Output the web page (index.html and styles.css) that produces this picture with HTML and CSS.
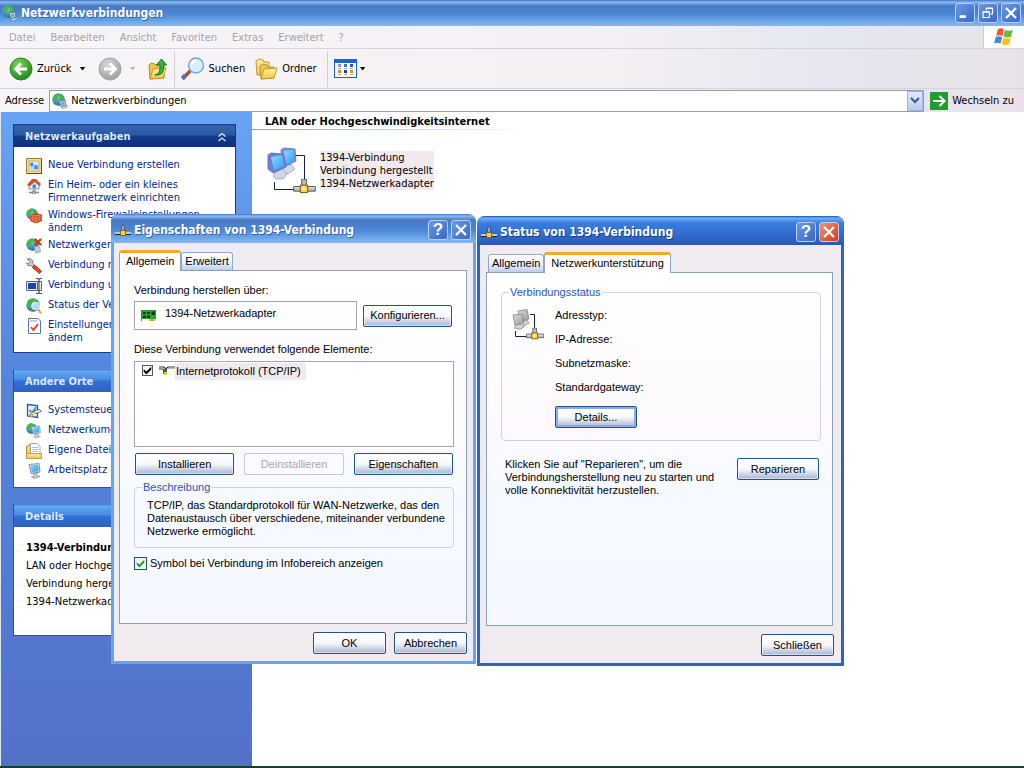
FILE: index.html
```html
<!DOCTYPE html>
<html lang="de">
  <head>
    <meta charset="UTF-8" />
    <meta name="viewport" content="width=device-width, initial-scale=1.0" />
    <title>Netzwerkverbindungen</title>
    <link rel="stylesheet" href="styles.css">
  </head>
  <body>
    <svg class="sprites" width="0" height="0" aria-hidden="true">
      <defs>
        <linearGradient id="g-screen" x1="0" y1="0" x2="1" y2="1">
          <stop offset="0" stop-color="#8fdcff" /><stop offset="1" stop-color="#2a9cf0" />
        </linearGradient>
        <linearGradient id="g-grey" x1="0" y1="0" x2="1" y2="1">
          <stop offset="0" stop-color="#dcdcdc" /><stop offset="1" stop-color="#9a9a9a" />
        </linearGradient>
        <radialGradient id="g-green" cx="0.4" cy="0.3" r="0.7">
          <stop offset="0" stop-color="#7fd65c" /><stop offset="1" stop-color="#1f8a1c" />
        </radialGradient>
        <radialGradient id="g-disabled" cx="0.4" cy="0.3" r="0.7">
          <stop offset="0" stop-color="#d8d8d8" /><stop offset="1" stop-color="#a2a2a4" />
        </radialGradient>
        <radialGradient id="g-globe" cx="0.35" cy="0.3" r="0.8">
          <stop offset="0" stop-color="#8fd0ff" /><stop offset="1" stop-color="#0d4fb4" />
        </radialGradient>
        <linearGradient id="g-folder" x1="0" y1="0" x2="0" y2="1">
          <stop offset="0" stop-color="#fff3a8" /><stop offset="1" stop-color="#f0c544" />
        </linearGradient>
      </defs>

      <symbol id="globe" viewBox="0 0 16 16">
        <circle cx="8" cy="8" r="7.700" fill="url(#g-globe)" />
        <path d="M2 4Q4 0.500 8 0.500L10 3L7 5L7 9L5 11L1 8ZM10 1L14 4L15 8L12 10L9.500 6Z" fill="#45b83a" />
        <path d="M6 12L9 15L4 14Z" fill="#35a82e" />
      </symbol>
      <symbol id="net" viewBox="0 0 16 16">
        <use href="#globe" width="13" height="13" />
        <path d="M7 8L13 7L14 12L9 13.500Z" fill="#dfe8f4" stroke="#5b6d8c" stroke-width="0.800" />
        <path d="M8.300 9L12.200 8.200L12.900 11.200L9.600 12.300Z" fill="#55aef0" />
        <path d="M9 14L15 12.500L15.500 14L10.500 15.800Z" fill="#e8e8e8" stroke="#6a6a6a" stroke-width="0.600" />
      </symbol>
      <symbol id="lan" viewBox="0 0 16 16">
        <path d="M7 3H9V9H7Z" fill="#d8d8d8" stroke="#222" stroke-width="0.600" />
        <path d="M0 10H16V12H0Z" fill="#c8c8c8" /><path d="M0 12H16V13H0Z" fill="#222" />
        <path d="M5.500 8.500H10.500V13.500H5.500Z" fill="#ffcf3a" stroke="#6a4a00" stroke-width="0.700" />
      </symbol>
      <symbol id="wizard" viewBox="0 0 16 16">
        <path d="M0.500 0.500H15.500V15.500H0.500Z" fill="#f4dc94" stroke="#a47c24" />
        <path d="M15.500 1V15.500H1" fill="none" stroke="#5c4a20" />
        <path d="M3 3H13V13H3Z" fill="#d8eafc" stroke="#c08c20" stroke-width="0.600" />
        <path d="M4 5L7 4.500L7.500 8L4.500 8.500ZM8 7.500L11.500 7L12 11L8.500 11.500Z" fill="#3a8be0" />
        <path d="M5 10H7.500" stroke="#8a98b0" />
      </symbol>
      <symbol id="home" viewBox="0 0 16 16">
        <path d="M3 6L8 2L13 6V11H3Z" fill="#e6eefa" stroke="#6077a0" stroke-width="0.800" />
        <path d="M1 7L6 1L10 1L15 6L13.500 8L8.500 4L3.500 8.500Z" fill="#d94f25" />
        <path d="M6.500 6.500H10V10H6.500Z" fill="#3e92dc" />
        <path d="M8 11V14M3 14.500H13" stroke="#888" stroke-width="1.500" /><path d="M6.500 13H9.500V16H6.500Z" fill="#bbb" stroke="#666" stroke-width="0.500" />
      </symbol>
      <symbol id="firewall" viewBox="0 0 16 16">
        <use href="#globe" width="12" height="12" />
        <path d="M4 7L10 5L16 6.500V13L10 15.500L4 13Z" fill="#c8441c" />
        <path d="M4 9.500L10 10.500L16 8.800M4 11.500L10 13L16 11M10 7V15M7 7.500V10M13 7V9.500M7 10V12M13 10V12M4 7L10 8L16 6.500" fill="none" stroke="#f0b080" stroke-width="0.600" />
      </symbol>
      <symbol id="disable" viewBox="0 0 16 16">
        <use href="#globe" width="13" height="13" />
        <path d="M8 9L13 8L14.500 12.500L9.500 14Z" fill="#b8d4f4" stroke="#8f9fbc" stroke-width="0.700" />
        <path d="M9 15L15 13.500" stroke="#bbb" stroke-width="1.500" />
        <path d="M9 1L15 7M15 1L9 7" stroke="#e02a10" stroke-width="2.200" />
      </symbol>
      <symbol id="wrench" viewBox="0 0 16 16">
        <path d="M1 1L4 0.500L7 3L7 6L9 8L7 9.500L5 7.500L2 7.500L0.500 5L3 5.500L4.500 4Z" fill="#c8ccd4" stroke="#565b66" stroke-width="0.700" />
        <path d="M8.500 7L15.500 13L13.500 15.500L6.500 9.500Z" fill="#e8452e" stroke="#8e1a0c" stroke-width="0.800" />
      </symbol>
      <symbol id="rename" viewBox="0 0 16 16">
        <path d="M0.500 3.500H11.500V12.500H0.500Z" fill="#e6e8ec" stroke="#5a6474" /><path d="M2 5H10V11H2Z" fill="#1546b8" />
        <path d="M11.500 3.500H15.500V12.500H11.500Z" fill="#eee" stroke="#5a6474" />
        <path d="M10 0.500H12L13 1.500L14 0.500H16M13 1V14.500M10 15.500H12L13 14.500L14 15.500H16" fill="none" stroke="#4a4f5a" stroke-width="1.200" />
      </symbol>
      <symbol id="status" viewBox="0 0 16 16">
        <use href="#globe" width="14" height="14" />
        <circle cx="9.500" cy="8" r="3.800" fill="#d0ecff" fill-opacity="0.800" stroke="#e8f4ff" />
        <path d="M12 11L15 15.500" stroke="#d0a030" stroke-width="1.800" />
      </symbol>
      <symbol id="settings" viewBox="0 0 16 16">
        <path d="M2.500 0.500H12L14.500 3V15.500H2.500Z" fill="#fff" stroke="#5878ac" /><path d="M4 2H11V4H4Z" fill="#b8cdf0" />
        <path d="M5 9L7.500 12L12 6" fill="none" stroke="#e04020" stroke-width="1.800" />
      </symbol>
      <symbol id="control" viewBox="0 0 16 16">
        <path d="M1.500 1.500L11.500 2.500V14.500L1.500 13Z" fill="#e4efff" stroke="#2a5ba8" stroke-width="1.300" />
        <path d="M3.500 7L6 10L10 4" fill="none" stroke="#3f88e0" stroke-width="1.800" />
        <path d="M8 8L14 6.500L15.500 8.500L9.500 10.500Z" fill="#fff" stroke="#333" stroke-width="0.700" /><path d="M3 11L6 9L8 12L5 15Z" fill="#e8b030" />
      </symbol>
      <symbol id="computer" viewBox="0 0 16 16">
        <path d="M3 1.500L13 0.500L14 9L5 10.500Z" fill="#dfe6f2" stroke="#6a7a9a" stroke-width="0.800" />
        <path d="M4.200 2.500L12 1.700L12.800 8.200L5.800 9.300Z" fill="url(#g-screen)" />
        <path d="M7 10.500L11 10V12.500L14 13.500L9 15.500L5.500 14L8 12.500Z" fill="#c8cad2" stroke="#7a7e8a" stroke-width="0.600" />
      </symbol>
      <symbol id="places" viewBox="0 0 16 16">
        <use href="#globe" width="11" height="11" /><use href="#computer" x="3" y="2" width="13" height="14" />
      </symbol>
      <symbol id="files" viewBox="0 0 16 16">
        <path d="M0.500 3.500L2 2H5L6.500 3.500V14.500H0.500Z" fill="#f4d468" stroke="#a57f18" stroke-width="0.800" />
        <path d="M4.500 0.500H11L14 3.500V12H4.500Z" fill="#fff" stroke="#7c92b8" stroke-width="0.800" />
        <path d="M6 4.500H12M6 6.500H12M6 8.500H12" stroke="#9ab0d4" stroke-width="0.800" />
        <path d="M0.500 10.500H15.500V15.500H0.500Z" fill="url(#g-folder)" stroke="#b08a20" stroke-width="0.800" />
      </symbol>
      <symbol id="card" viewBox="0 0 16 16">
        <path d="M0 3H15V12H0Z" fill="#2f9e34" /><path d="M0 3H1V14H0Z" fill="#666" />
        <path d="M2 5H5V7H2ZM6 5H9V7H6ZM2 8.500H5V11H2ZM6 8.500H9V11H6ZM10.500 4.500H14V8H10.500Z" fill="#123c16" />
        <path d="M8 12H14V14H8Z" fill="#d6b42c" />
      </symbol>
      <symbol id="protocol" viewBox="0 0 16 16">
        <path d="M0 4H5L7 6L9 4H16M0 6H4L7 10" fill="none" stroke="#333" stroke-width="1.200" />
        <path d="M9 5.200H16" stroke="#999" /><path d="M4 6H8V11H4Z" fill="#555" /><path d="M5 9H8V12H5Z" fill="#e0d020" />
      </symbol>
      <symbol id="logo" viewBox="0 0 20 18">
        <path d="M4 1Q7 -0.500 10 1.500L8.500 8Q5.500 6.500 2 8Z" fill="#f0592a" />
        <path d="M11 2Q14.500 3.500 19 2L17 9Q13 10 9.500 8.500Z" fill="#6cba3c" />
        <path d="M1.800 9Q5 7.500 8.200 9L6.500 15.500Q3.500 14 0 15.500Z" fill="#3f86e0" />
        <path d="M9.200 9.500Q13 11 16.800 10L15 16.500Q11 18 7.500 16Z" fill="#fcc320" />
      </symbol>
      <symbol id="connection" viewBox="0 0 50 48">
        <path d="M28 8.500H37.500V33M7.500 35V42.500H27" fill="none" stroke="#151c60" />
        <path d="M17 18L24 17L28 22L21 27L15 24Z" fill="#d2d6e8" stroke="#8f95b4" stroke-width="0.700" />
        <path d="M14 3L17 1L28 2L29 14L19 19L15 17Z" fill="#7f90dc" stroke="#5a69ba" stroke-width="0.800" />
        <path d="M17 4L26.500 3L27.500 13.500L19 17Z" fill="url(#g-screen)" />
        <path d="M8 25L15 22L20 27L16 32L9 32L6 29Z" fill="#d2d6e8" stroke="#8f95b4" stroke-width="0.700" />
        <path d="M1 8L4 6L16 7L19 20L6 26L1 22Z" fill="#6f80d4" stroke="#5a69ba" stroke-width="0.800" />
        <path d="M4 10L15 8L17.500 19L7 23Z" fill="url(#g-screen)" />
      </symbol>
      <symbol id="plug" viewBox="0 0 24 16">
        <path d="M9 0H14V8H9Z" fill="#b8bcc0" stroke="#333" stroke-width="0.800" />
        <path d="M0.500 8H23.500V13H0.500Z" fill="#b8bcc0" stroke="#333" stroke-width="0.800" /><path d="M1 9.500H23" stroke="#eee" />
        <path d="M7.500 6.500H15.500V14.500H7.500Z" fill="#ffd04a" stroke="#704c00" /><path d="M9.500 8.500H13V12H9.500Z" fill="#fff0a0" />
      </symbol>
      <symbol id="connection-off" viewBox="0 0 32 32">
        <path d="M18 5.500H22.500V20M3.500 22V27.500H16" fill="none" stroke="#151c60" />
        <path d="M10 12L15 11L17 14L12 17Z" fill="#d2d2d2" stroke="#909090" stroke-width="0.800" />
        <path d="M6 2L15 0.500L17 10L9 12Z" fill="url(#g-grey)" stroke="#888" stroke-width="0.800" />
        <path d="M4 16L9 15L12 18L8 20.500L2 19Z" fill="#d2d2d2" stroke="#909090" stroke-width="0.800" />
        <path d="M1 6L10 5L12 13.500L3 16.500Z" fill="url(#g-grey)" stroke="#888" stroke-width="0.800" />
        <use href="#plug" x="14" y="19" width="18" height="12" />
      </symbol>
    </svg>

    <header class="titlebar main-title">
      <svg class="icon"><use href="#net" /></svg>
      <h1>Netzwerkverbindungen</h1>
      <button class="cap" aria-label="Minimieren"><svg viewBox="0 0 20 20"><path d="M4 14H11" stroke="#fff" stroke-width="3" /></svg></button>
      <button class="cap" aria-label="Wiederherstellen"><svg viewBox="0 0 20 20"><path d="M4.500 9H11.500V15H4.500ZM4.500 8.500H11.500M8 7V5H15V11H13M8 4.500H15" fill="none" stroke="#fff" stroke-width="1.300" /></svg></button>
      <button class="cap" aria-label="Schließen"><svg viewBox="0 0 20 20"><path d="M4.500 4.500L15.500 15.500M15.500 4.500L4.500 15.500" stroke="#fff" stroke-width="2.500" /></svg></button>
    </header>

    <nav class="menubar">
      <a href="#">Datei</a>
      <a href="#">Bearbeiten</a>
      <a href="#">Ansicht</a>
      <a href="#">Favoriten</a>
      <a href="#">Extras</a>
      <a href="#">Erweitert</a>
      <a href="#">?</a>
      <span class="logo"><svg width="20" height="18"><use href="#logo" /></svg></span>
    </nav>

    <div class="toolbar">
      <button class="tool">
        <svg width="24" height="24"><circle cx="12" cy="12" r="11" fill="url(#g-green)" stroke="#2d8a28" /><path d="M18 12H7M12 6.500L6.500 12L12 17.500" fill="none" stroke="#fff" stroke-width="2.800" /></svg>
        Zurück
      </button>
      <button class="arrow" aria-label="Zurück-Verlauf"></button>
      <button class="tool forward" aria-label="Vorwärts" disabled>
        <svg width="24" height="24"><circle cx="12" cy="12" r="11" fill="url(#g-disabled)" stroke="#a4a4a8" /><path d="M6 12H17M12 6.500L17.500 12L12 17.500" fill="none" stroke="#fff" stroke-width="2.800" /></svg>
      </button>
      <button class="arrow" aria-label="Vorwärts-Verlauf" disabled></button>
      <button class="tool up" aria-label="Aufwärts">
        <svg width="20" height="24"><path d="M1 8L3 6L7 7L9 9H16V21L2 22Z" fill="#edc34a" stroke="#b98d22" /><path d="M2 22L5 12L18 11L15 21Z" fill="url(#g-folder)" stroke="#c09a2a" /><path d="M7 18Q13 17 12 8H8.500L13.500 2L18.500 8H15.500Q17 19 7 18Z" fill="#3fb43a" stroke="#13741a" /></svg>
      </button>
      <span class="sep"></span>
      <button class="tool search">
        <svg width="24" height="24"><path d="M1.500 22L10 13" stroke="#a8532c" stroke-width="3.500" /><path d="M1.500 21L4 18.500" stroke="#5b69c0" stroke-width="4" /><circle cx="15" cy="8.500" r="7.500" fill="#d6efff" stroke="#7ea6dc" stroke-width="1.500" /><path d="M10.500 8Q11 4 15 3.500" fill="none" stroke="#fff" stroke-width="2" /></svg>
        Suchen
      </button>
      <button class="tool folders">
        <svg width="23" height="24"><path d="M1 4L4 2L8 3L9 5H14V17L2 18Z" fill="url(#g-folder)" stroke="#c29a30" /><path d="M5 9L8 7L12 8L13 10H19V21L6 22Z" fill="#f0c850" stroke="#b8902a" /><path d="M6 22L9 12L22 11L19 21Z" fill="url(#g-folder)" stroke="#c29a30" /></svg>
        Ordner
      </button>
      <span class="sep"></span>
      <button class="tool view" aria-label="Ansichten">
        <svg width="24" height="20"><rect x="0.500" y="0.500" width="22" height="18" fill="#fff" stroke="#1d5fc4" /><path d="M0 0H23V4H0Z" fill="#1d62d4" /><path d="M4 5H7V8H4Z" fill="#9c8cc8" /><path d="M10 5H13V8H10Z" fill="#3a72c8" /><path d="M16 5H19V8H16Z" fill="#2858b8" /><path d="M4 11H7V14H4Z" fill="#f07850" /><path d="M10 11H13V14H10Z" fill="#20389c" /><path d="M16 11H19V14H16Z" fill="#c8a020" /><path d="M4 9.500H7M10 9.500H13M16 9.500H19M4 15.500H7M10 15.500H13M16 15.500H19" stroke="#aaa" /></svg>
      </button>
      <button class="arrow" aria-label="Ansicht wählen"></button>
    </div>

    <form class="address">
      <label for="address">Adresse</label>
      <div class="combo">
        <svg class="icon"><use href="#net" /></svg>
        <input id="address" type="text" value="Netzwerkverbindungen">
        <button type="button" class="drop" aria-label="Liste öffnen"><svg width="10" height="7"><path d="M1 1L5 5L9 1" fill="none" stroke="#44597c" stroke-width="2" /></svg></button>
      </div>
      <button type="button" class="go">
        <svg width="18" height="18"><rect width="18" height="18" rx="1" fill="#249a30" /><path d="M3 9H14M9.500 4L14.500 9L9.500 14" fill="none" stroke="#fff" stroke-width="2" /></svg>
        Wechseln zu
      </button>
    </form>

    <div class="explorer">
      <aside class="sidebar">
        <section class="box primary">
          <h2>Netzwerkaufgaben <svg width="10" height="10"><path d="M1.500 4.500L5 1.500L8.500 4.500M1.500 9L5 6L8.500 9" fill="none" stroke="#dce8ff" stroke-width="1.300" /></svg></h2>
          <ul class="tasks">
            <li><svg class="icon"><use href="#wizard" /></svg><a href="#">Neue Verbindung erstellen</a></li>
            <li><svg class="icon"><use href="#home" /></svg><a href="#">Ein Heim- oder ein kleines Firmennetzwerk einrichten</a></li>
            <li><svg class="icon"><use href="#firewall" /></svg><a href="#">Windows-Firewalleinstellungen ändern</a></li>
            <li><svg class="icon"><use href="#disable" /></svg><a href="#">Netzwerkgerät deaktivieren</a></li>
            <li><svg class="icon"><use href="#wrench" /></svg><a href="#">Verbindung reparieren</a></li>
            <li><svg class="icon"><use href="#rename" /></svg><a href="#">Verbindung umbenennen</a></li>
            <li><svg class="icon"><use href="#status" /></svg><a href="#">Status der Verbindung</a></li>
            <li><svg class="icon"><use href="#settings" /></svg><a href="#">Einstellungen dieser Verbindung ändern</a></li>
          </ul>
        </section>

        <section class="box">
          <h2>Andere Orte</h2>
          <ul class="tasks">
            <li><svg class="icon"><use href="#control" /></svg><a href="#">Systemsteuerung</a></li>
            <li><svg class="icon"><use href="#places" /></svg><a href="#">Netzwerkumgebung</a></li>
            <li><svg class="icon"><use href="#files" /></svg><a href="#">Eigene Dateien</a></li>
            <li><svg class="icon"><use href="#computer" /></svg><a href="#">Arbeitsplatz</a></li>
          </ul>
        </section>

        <section class="box">
          <h2>Details</h2>
          <div class="details">
            <strong>1394-Verbindung</strong>
            <p>LAN oder Hochgeschwindigkeitsinternet</p>
            <p>Verbindung hergestellt</p>
            <p>1394-Netzwerkadapter</p>
          </div>
        </section>
      </aside>

      <main class="content">
        <h2>LAN oder Hochgeschwindigkeitsinternet</h2>
        <div class="connection">
          <svg width="50" height="48"><use href="#connection" /><use href="#plug" x="26" y="32" width="23" height="15" /></svg>
          <p>1394-Verbindung<br>Verbindung hergestellt<br>1394-Netzwerkadapter</p>
        </div>
      </main>
    </div>

    <section class="dialog properties" role="dialog" aria-labelledby="prop-title">
      <header class="titlebar">
        <svg class="icon"><use href="#lan" /></svg>
        <h2 id="prop-title">Eigenschaften von 1394-Verbindung</h2>
        <button class="cap" aria-label="Hilfe">?</button>
        <button class="cap" aria-label="Schließen"><svg viewBox="0 0 20 20"><path d="M4.500 4.500L15.500 15.500M15.500 4.500L4.500 15.500" stroke="#fff" stroke-width="2.500" /></svg></button>
      </header>
      <div class="tabs" role="tablist">
        <button class="tab active" role="tab" aria-selected="true">Allgemein</button>
        <button class="tab" role="tab" aria-selected="false">Erweitert</button>
      </div>
      <div class="page" role="tabpanel">
        <p>Verbindung herstellen über:</p>
        <div class="device-row">
          <div class="device"><svg class="icon"><use href="#card" /></svg>1394-Netzwerkadapter</div>
          <button class="btn">Konfigurieren...</button>
        </div>
        <p>Diese Verbindung verwendet folgende Elemente:</p>
        <div class="list">
          <input id="tcpip" class="check black" type="checkbox" checked>
          <svg class="icon"><use href="#protocol" /></svg>
          <label for="tcpip">Internetprotokoll (TCP/IP)</label>
        </div>
        <div class="actions">
          <button class="btn">Installieren</button>
          <button class="btn" disabled>Deinstallieren</button>
          <button class="btn">Eigenschaften</button>
        </div>
        <fieldset class="group">
          <legend>Beschreibung</legend>
          <p>TCP/IP, das Standardprotokoll für WAN-Netzwerke, das den Datenaustausch über verschiedene, miteinander verbundene Netzwerke ermöglicht.</p>
        </fieldset>
        <div class="option">
          <input id="tray" class="check" type="checkbox" checked>
          <label for="tray">Symbol bei Verbindung im Infobereich anzeigen</label>
        </div>
      </div>
      <footer>
        <button class="btn">OK</button>
        <button class="btn">Abbrechen</button>
      </footer>
    </section>

    <section class="dialog status" role="dialog" aria-labelledby="status-title">
      <header class="titlebar">
        <svg class="icon"><use href="#lan" /></svg>
        <h2 id="status-title">Status von 1394-Verbindung</h2>
        <button class="cap" aria-label="Hilfe">?</button>
        <button class="cap close" aria-label="Schließen"><svg viewBox="0 0 20 20"><path d="M4.500 4.500L15.500 15.500M15.500 4.500L4.500 15.500" stroke="#fff" stroke-width="2.500" /></svg></button>
      </header>
      <div class="tabs" role="tablist">
        <button class="tab" role="tab" aria-selected="false">Allgemein</button>
        <button class="tab active" role="tab" aria-selected="true">Netzwerkunterstützung</button>
      </div>
      <div class="page" role="tabpanel">
        <fieldset class="group">
          <legend>Verbindungsstatus</legend>
          <div class="state">
            <svg width="32" height="32"><use href="#connection-off" /></svg>
            <div>
              <ul>
                <li>Adresstyp:</li>
                <li>IP-Adresse:</li>
                <li>Subnetzmaske:</li>
                <li>Standardgateway:</li>
              </ul>
              <button class="btn focus">Details...</button>
            </div>
          </div>
        </fieldset>
        <div class="repair">
          <p>Klicken Sie auf "Reparieren", um die Verbindungsherstellung neu zu starten und volle Konnektivität herzustellen.</p>
          <button class="btn">Reparieren</button>
        </div>
      </div>
      <footer>
        <button class="btn">Schließen</button>
      </footer>
    </section>
  </body>
</html>
```

FILE: styles.css
```css
* {
  box-sizing: border-box;
}

body {
  display: flex;
  flex-direction: column;
  height: 100vh;
  margin: 0;
  overflow: hidden;
  background: #fff;
  border-bottom: 2px solid #1d3c34;
  font: 11px/13px "DejaVu Sans Condensed", "Noto Sans", sans-serif;
  color: #000;
}

h1, h2, p, ul {
  margin: 0;
  padding: 0;
}

ul {
  list-style: none;
}

button, input {
  font: inherit;
  color: inherit;
  margin: 0;
  padding: 0;
}

a {
  color: inherit;
  text-decoration: none;
}

svg {
  display: block;
  flex: none;
}

.sprites {
  position: absolute;
}

.icon {
  width: 16px;
  height: 16px;
}

/* title bars */
.titlebar {
  display: flex;
  align-items: center;
  gap: 3px;
  height: 29px;
  padding: 0 3px 0 2px;
  background: linear-gradient(#3f6fc0, #8abcf0 2px, #4a78c4 6px, #4a88d6 55%, #84baf0);
  color: #fff;
}

.titlebar h1,
.titlebar h2 {
  flex: 1;
  font: bold 12px/16px "DejaVu Sans Condensed", sans-serif;
  text-shadow: 1px 1px #3a62a8;
  white-space: nowrap;
}

.main-title {
  height: 26px;
}

.cap {
  width: 20px;
  height: 20px;
  border: 1px solid #b8d0f4;
  border-radius: 3px;
  background: linear-gradient(135deg, #6a98e4, #3a68c4);
  font: bold 17px/18px "Liberation Sans", sans-serif;
  color: #fff;
}

.cap svg {
  width: 18px;
  height: 18px;
}

.cap.close {
  background: linear-gradient(135deg, #f09478, #d03c18);
}

/* explorer bars */
.menubar,
.toolbar,
.address {
  display: flex;
  align-items: center;
  background: linear-gradient(90deg, #f8f5f8, #f4eff3 60%, #e6e7f0 80%, #e8e2e8);
  border-bottom: 1px solid #d6d3dc;
}

.menubar {
  height: 23px;
  gap: 15px;
  padding-left: 9px;
  color: #a5a2a8;
}

.logo {
  display: flex;
  align-items: center;
  justify-content: center;
  width: 41px;
  height: 22px;
  margin-left: auto;
  background: #fff;
  border-left: 1px solid #d0cdd6;
}

.toolbar {
  height: 40px;
  padding-left: 9px;
}

.tool,
.go {
  display: flex;
  align-items: center;
  gap: 4px;
  border: none;
  background: none;
}

.arrow {
  width: 6px;
  height: 4px;
  margin: 0 12px 0 8px;
  border: none;
  background: #000;
  clip-path: polygon(0 0, 100% 0, 50% 100%);
}

.arrow:disabled {
  background: #b8b6ba;
}

.sep {
  width: 1px;
  height: 36px;
  margin: 0 6px;
  background: #d0ced6;
}

.folders {
  margin: 0 4px 0 10px;
}

.view + .arrow {
  margin-left: 2px;
}

.address {
  height: 23px;
  gap: 5px;
  padding: 0 10px 0 5px;
  border-bottom: none;
}

.combo {
  display: flex;
  flex: 1;
  align-items: center;
  gap: 3px;
  height: 22px;
  padding-left: 2px;
  background: #fff;
  border: 1px solid #9b9ba3;
}

.combo input {
  flex: 1;
  border: none;
  background: none;
}

.drop {
  display: flex;
  align-items: center;
  justify-content: center;
  width: 16px;
  height: 20px;
  border: 1px solid #9db6e0;
  background: linear-gradient(#e0eafc, #b8cbee);
}

.go {
  margin-left: 1px;
}

.explorer {
  display: flex;
  flex: 1;
  min-height: 0;
}

/* task pane */
.sidebar {
  display: flex;
  flex-direction: column;
  gap: 16px;
  width: 252px;
  padding: 12px 16px 0 12px;
  overflow: hidden;
  border-left: 1px solid #dfe6f4;
  background: linear-gradient(#68a4f2, #5585dc 40%, #5272c8);
}

.box {
  background: #fff;
  border: 1px solid #2452b4;
  border-top: none;
}

.box h2 {
  display: flex;
  align-items: center;
  justify-content: space-between;
  height: 23px;
  padding: 2px 8px 0 11px;
  background: linear-gradient(#3c78d4, #62a8f2 2px, #4a8ce6 45%, #2f6fd6 55%, #3260c0);
  font: bold 11px/13px "DejaVu Sans Condensed", sans-serif;
  color: #dce8ff;
}

.primary {
  border-color: #12398c;
}

.primary h2 {
  background: linear-gradient(#173f8c, #3562ac 2px, #2b5aa6 45%, #123c8a 55%, #0c2f7c);
}

.tasks {
  display: flex;
  flex-direction: column;
  gap: 4px;
  padding: 11px 12px 8px;
  color: #00268c;
}

.tasks li {
  display: flex;
  gap: 6px;
  min-height: 16px;
}

.details {
  padding: 12px 8px 24px 12px;
  line-height: 18px;
  white-space: nowrap;
  overflow: hidden;
}

.content {
  flex: 1;
}

.content h2 {
  padding: 3px 13px 2px;
  font: bold 11px/13px "DejaVu Sans Condensed", sans-serif;
  background: linear-gradient(90deg, #62aaf8, #fff 278px) bottom / 100% 1px no-repeat;
}

.connection {
  display: flex;
  gap: 3px;
  padding: 17px 15px;
}

.connection p {
  align-self: flex-start;
  margin-top: 4px;
  background: #f0eaee;
}

/* dialogs */
.dialog {
  position: absolute;
  display: flex;
  flex-direction: column;
  border: 3px solid #65a4f0;
  border-top: none;
  border-radius: 8px 8px 0 0;
  background: #f0ebee;
  font: 11px/13px "Liberation Sans", sans-serif;
}

.dialog .titlebar {
  margin: 0 -3px;
  padding: 2px 5px 0 4px;
  border-radius: 8px 8px 0 0;
}

.properties {
  left: 111px;
  top: 214px;
  width: 365px;
}

.status {
  left: 477px;
  top: 216px;
  width: 367px;
  border-color: #2f62c4;
}

.status .titlebar {
  background: linear-gradient(#1c4cae, #6cb0f8 2px, #3a7cdc 7px, #3270d4 55%, #2a58b4);
}

.status .titlebar h2 {
  text-shadow: 1px 1px #163a88;
}

.tabs {
  display: flex;
  align-items: flex-end;
  padding: 7px 5px 0;
}

.tab {
  height: 18px;
  padding: 0 3px;
  border: 1px solid #8fa8c8;
  border-bottom: none;
  border-radius: 3px 3px 0 0;
  background: linear-gradient(#fff, #f0f4fc 50%, #bccdec);
}

.tab.active {
  z-index: 1;
  height: 21px;
  margin-bottom: -1px;
  padding: 0 6px 2px;
  border-top: 3px solid #f8a828;
  background: #fff;
}

.status .tabs {
  padding-left: 8px;
}

.page {
  display: flex;
  flex-direction: column;
  min-height: 354px;
  margin: 0 6px 0 5px;
  padding: 13px 12px 12px 14px;
  border: 1px solid #8a9fb8;
  background: linear-gradient(#fff, #fdf9fe 45%, #f6faff 60%, #f6f7ff);
}

.btn {
  height: 22px;
  border: 1px solid #24508c;
  border-radius: 2px;
  background: linear-gradient(#fff, #f6f8fc 50%, #a8b4d2);
  box-shadow: inset 0 0 0 1px #fff8;
}

.btn:disabled {
  border-color: #c8c8cc;
  background: #fbfaff;
  color: #a8a8ac;
}

.btn.focus {
  box-shadow: inset 0 0 0 2px #88acec;
}

.device-row {
  display: flex;
  align-items: center;
  gap: 6px;
  margin: 4px 0 13px;
}

.device {
  display: flex;
  flex: 1;
  gap: 8px;
  height: 29px;
  padding: 5px 6px;
  border: 1px solid #a5a5ad;
}

.device-row .btn {
  width: 89px;
  margin-right: 2px;
}

.list {
  display: flex;
  align-items: flex-start;
  height: 86px;
  margin: 5px 0 6px;
  padding: 1px 7px;
  border: 1px solid #a5a5ad;
  background: #fff;
}

.list label {
  padding: 2px 5px 2px 1px;
  background: #f0eaee;
}

.list .icon {
  margin-left: 6px;
}

.check {
  appearance: none;
  display: grid;
  place-items: center;
  flex: none;
  width: 13px;
  height: 13px;
  border: 1px solid #1c5180;
  background: #f4f4f2;
}

.check:checked::before {
  content: "";
  width: 9px;
  height: 9px;
  background: #22a122;
  clip-path: polygon(8% 35%, 38% 62%, 92% 8%, 92% 38%, 38% 94%, 8% 65%);
}

.check.black {
  width: 11px;
  height: 11px;
  margin-top: 2px;
  border-color: #555;
}

.check.black:checked::before {
  background: #000;
}

.actions {
  display: grid;
  grid-template-columns: repeat(3, 1fr);
  gap: 10px;
  margin: 0 1px;
}

.group {
  margin: 6px 0 0;
  padding: 5px 2px 9px 12px;
  border: 1px solid #d2d2d8;
  border-radius: 4px;
}

.group legend {
  margin-left: -5px;
  padding: 0 1px;
  color: #2c55b4;
}

.option {
  display: flex;
  gap: 3px;
  margin-top: 9px;
}

footer {
  display: flex;
  justify-content: flex-end;
  gap: 8px;
  padding: 8px 6px 7px;
}

footer .btn {
  width: 73px;
}

.status .page {
  margin: 0 8px 0 6px;
  padding-right: 11px;
}

.status .group {
  margin: 0;
  padding: 10px 10px 12px;
}

.status .group legend {
  margin-left: -3px;
}

.state {
  display: flex;
  gap: 11px;
}

.state li {
  height: 24px;
}

.state .btn {
  width: 82px;
  margin-top: 1px;
}

.repair {
  display: flex;
  align-items: flex-start;
  justify-content: space-between;
  padding: 17px 2px 0 4px;
}

.repair p {
  width: 212px;
}

.repair .btn {
  width: 82px;
}

.status footer {
  padding-right: 7px;
}
```
